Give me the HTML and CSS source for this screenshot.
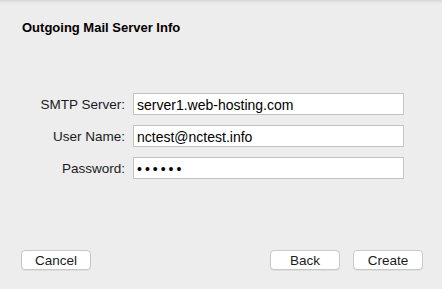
FILE: index.html
```html
<!DOCTYPE html>
<html lang="en">
<head>
  <meta charset="UTF-8" />
  <title>Outgoing Mail Server Info</title>
  <link rel="stylesheet" href="styles.css">
</head>
<body>
  <div class="sheet">
    <div class="sheet-title">Outgoing Mail Server Info</div>

    <div class="server-form">
      <label class="field-label" for="smtp">SMTP Server:</label>
      <input class="field-input" id="smtp" type="text" value="server1.web-hosting.com">

      <label class="field-label" for="user">User Name:</label>
      <input class="field-input" id="user" type="text" value="nctest@nctest.info">

      <label class="field-label" for="pass">Password:</label>
      <input class="field-input" id="pass" type="password" value="secret">
    </div>

    <div class="button-bar">
      <button class="push-button">Cancel</button>
      <div class="right-group">
        <button class="push-button">Back</button>
        <button class="push-button">Create</button>
      </div>
    </div>
  </div>
</body>
</html>
```

FILE: styles.css
```css
html, body {
  margin: 0;
  height: 100%;
  background-color: #ededed;
  font-family: "Liberation Sans", Arial, sans-serif;
  font-size: 13.5px;
  color: #1a1a1a;
  overflow: hidden;
}

.sheet {
  height: 100%;
  display: flex;
  flex-direction: column;
  box-sizing: border-box;
  background: linear-gradient(#d6d6d6, #e6e6e6 2px, #ededed 4px);
}

.sheet-title {
  padding: 20px 22px 0 22px;
  font-size: 13px;
  font-weight: bold;
  line-height: 16px;
  color: #000;
}

.server-form {
  margin-top: 57px;
  padding-left: 20px;
  display: grid;
  grid-template-columns: 105px 271px;
  column-gap: 8px;
  row-gap: 10px;
  align-items: center;
}

.field-label {
  text-align: right;
  white-space: nowrap;
}

.field-input {
  box-sizing: border-box;
  height: 22px;
  margin: 0;
  padding: 1px 3px 0 3px;
  border: 1px solid #c3c3c3;
  border-radius: 0;
  background-color: #fff;
  font-family: inherit;
  font-size: 14px;
  color: #000;
  outline: none;
}

.field-input[type="password"] {
  letter-spacing: 3px;
}

.button-bar {
  margin-top: auto;
  padding: 0 19px 19px 21px;
  display: flex;
  justify-content: space-between;
}

.right-group {
  display: flex;
  gap: 13px;
}

.push-button {
  width: 70px;
  height: 20px;
  padding: 0;
  border: 1px solid #c8c8c8;
  border-radius: 4px;
  background-color: #fff;
  box-shadow: 0 1px 0 rgba(0, 0, 0, 0.06);
  font-family: inherit;
  font-size: 13.5px;
  color: #1a1a1a;
}
```
